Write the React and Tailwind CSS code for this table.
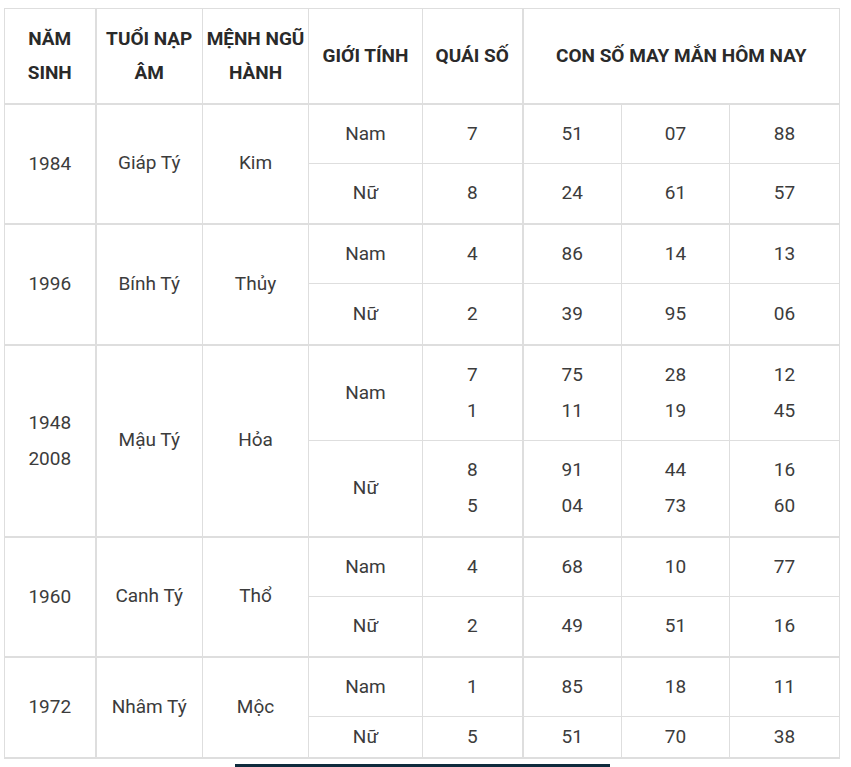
import React from "react";

const groups = [
  {
    years: ["1984"],
    tuoi: "Giáp Tý",
    menh: "Kim",
    rows: [
      { gt: "Nam", qs: ["7"], nums: [["51"], ["07"], ["88"]] },
      { gt: "Nữ", qs: ["8"], nums: [["24"], ["61"], ["57"]] },
    ],
    h: [60, 60],
  },
  {
    years: ["1996"],
    tuoi: "Bính Tý",
    menh: "Thủy",
    rows: [
      { gt: "Nam", qs: ["4"], nums: [["86"], ["14"], ["13"]] },
      { gt: "Nữ", qs: ["2"], nums: [["39"], ["95"], ["06"]] },
    ],
    h: [60, 61],
  },
  {
    years: ["1948", "2008"],
    tuoi: "Mậu Tý",
    menh: "Hỏa",
    rows: [
      { gt: "Nam", qs: ["7", "1"], nums: [["75", "11"], ["28", "19"], ["12", "45"]] },
      { gt: "Nữ", qs: ["8", "5"], nums: [["91", "04"], ["44", "73"], ["16", "60"]] },
    ],
    h: [96, 96],
  },
  {
    years: ["1960"],
    tuoi: "Canh Tý",
    menh: "Thổ",
    rows: [
      { gt: "Nam", qs: ["4"], nums: [["68"], ["10"], ["77"]] },
      { gt: "Nữ", qs: ["2"], nums: [["49"], ["51"], ["16"]] },
    ],
    h: [60, 60],
  },
  {
    years: ["1972"],
    tuoi: "Nhâm Tý",
    menh: "Mộc",
    rows: [
      { gt: "Nam", qs: ["1"], nums: [["85"], ["18"], ["11"]] },
      { gt: "Nữ", qs: ["5"], nums: [["51"], ["70"], ["38"]] },
    ],
    h: [60, 41],
  },
];

const Lines = ({ items }) => (
  <div className="flex flex-col items-center">
    {items.map((t, i) => (
      <div key={i} className="leading-[36px]">
        {t}
      </div>
    ))}
  </div>
);

const td = "border border-[#dedede] text-center align-middle p-0";

export default function App() {
  return (
    <div
      className="bg-white w-[851px] h-[767px] overflow-hidden pt-[8px] pl-[4px] text-[#3c3c3c] text-[19px]"
      style={{ fontFamily: "Roboto, 'Noto Sans', sans-serif" }}
    >
      <table className="table-fixed border-collapse w-[835px]">
        <colgroup>
          <col className="w-[91px]" />
          <col className="w-[107px]" />
          <col className="w-[106px]" />
          <col className="w-[114px]" />
          <col className="w-[100px]" />
          <col className="w-[99px]" />
          <col className="w-[108px]" />
          <col className="w-[110px]" />
        </colgroup>
        <thead>
          <tr className="h-[95px] font-bold text-[#2a2a2a] text-[19px] leading-[34px]">
            <th className={td + " border-b-2 border-r-2"}>
              NĂM
              <br />
              SINH
            </th>
            <th className={td + " border-b-2"}>
              TUỔI NẠP
              <br />
              ÂM
            </th>
            <th className={td + " border-b-2"}>
              MỆNH NGŨ
              <br />
              HÀNH
            </th>
            <th className={td + " border-b-2"}>GIỚI TÍNH</th>
            <th className={td + " border-b-2"}>QUÁI SỐ</th>
            <th colSpan={3} className={td + " border-b-2 border-l-2"}>
              CON SỐ MAY MẮN HÔM NAY
            </th>
          </tr>
        </thead>
        <tbody>
          {groups.map((g, gi) =>
            g.rows.map((r, ri) => (
              <tr key={gi + "-" + ri} style={{ height: g.h[ri] }}>
                {ri === 0 && (
                  <>
                    <td rowSpan={2} className={td + " border-b-2 border-r-2"}>
                      <Lines items={g.years} />
                    </td>
                    <td rowSpan={2} className={td + " border-b-2"}>
                      {g.tuoi}
                    </td>
                    <td rowSpan={2} className={td + " border-b-2"}>
                      {g.menh}
                    </td>
                  </>
                )}
                <td className={td + (ri === 1 ? " border-b-2" : "")}>{r.gt}</td>
                <td className={td + (ri === 1 ? " border-b-2" : "")}>
                  <Lines items={r.qs} />
                </td>
                {r.nums.map((n, ni) => (
                  <td
                    key={ni}
                    className={
                      td +
                      (ri === 1 ? " border-b-2" : "") +
                      (ni === 0 ? " border-l-2" : "")
                    }
                  >
                    <Lines items={n} />
                  </td>
                ))}
              </tr>
            ))
          )}
        </tbody>
      </table>
      <div className="mt-[5px] ml-[231px] w-[375px] h-[6px] bg-[#0e2b3d]" />
    </div>
  );
}
